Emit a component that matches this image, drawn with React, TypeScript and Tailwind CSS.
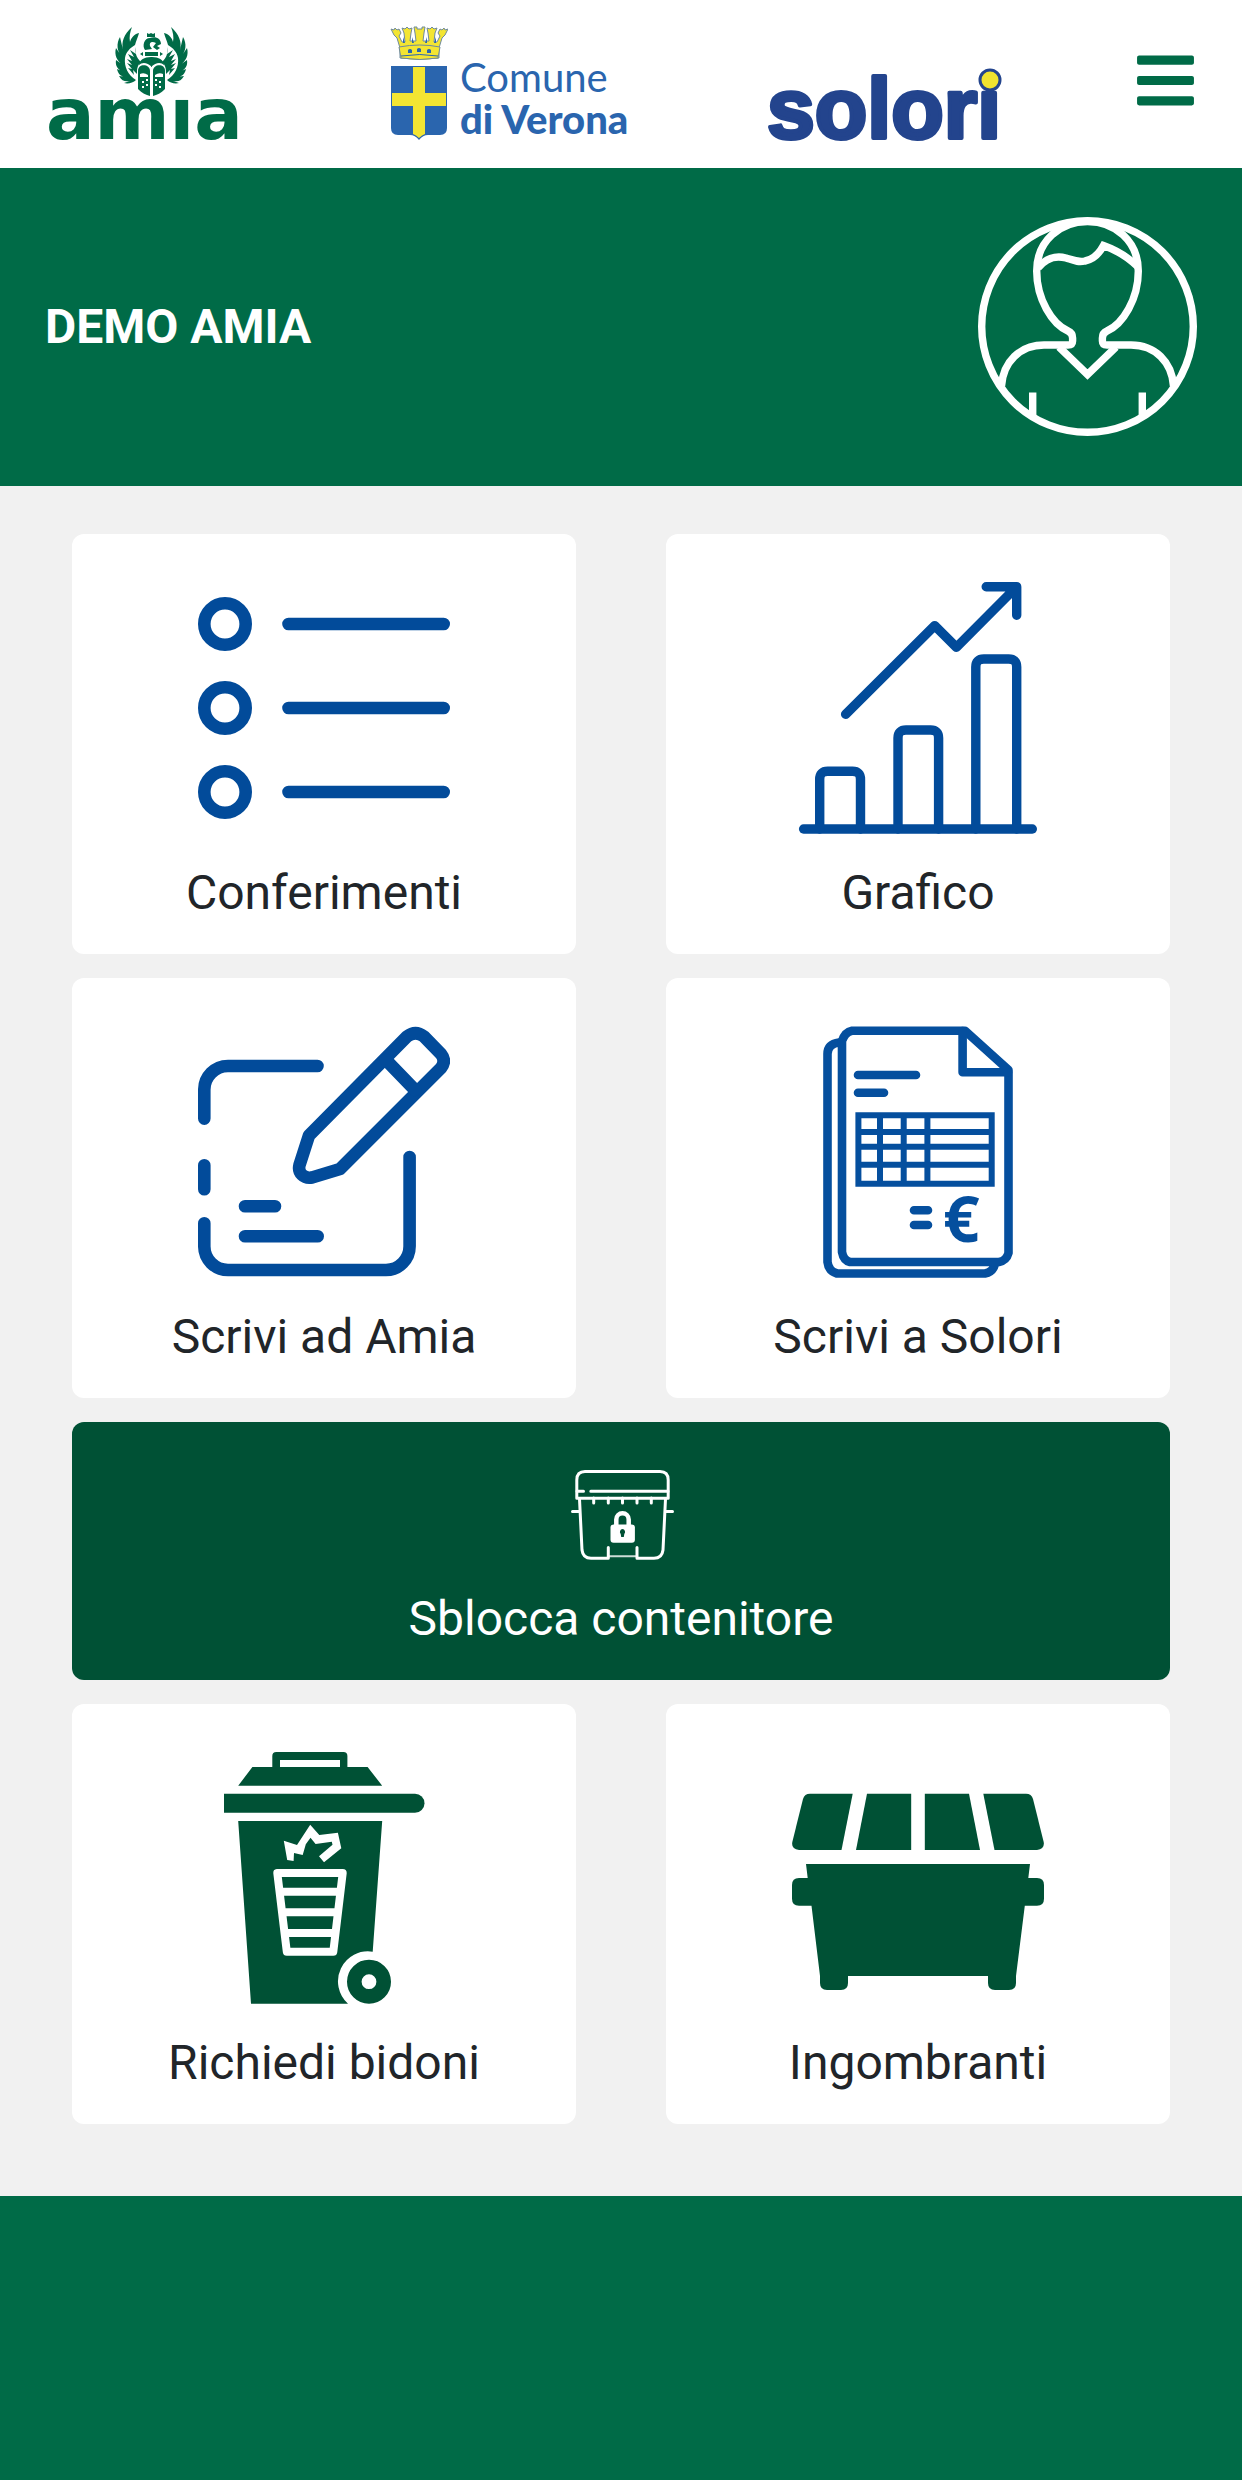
import type { ReactNode } from 'react'
import { FaBars } from 'react-icons/fa'

interface TileProps {
  label: string
  icon: ReactNode
}

function Tile({ label, icon }: TileProps) {
  return (
    <a href="#" className="flex flex-col items-center gap-6 rounded-xl bg-white pt-12 pb-[26px] text-[#212529]">
      {icon}
      <span className="text-5xl leading-[70px]">{label}</span>
    </a>
  )
}

/* Half of the emblem, mirrored around the logo's axis */
function AmiaWing() {
  return (
    <>
      <path d="M84 3C76 10 73 18 75 26L72 13C68 20 69 27 74 33L68 24C66 31 69 37 75 41L68 36C67 42 70 46 76 48L69 45C70 50 73 53 79 53L71 52C74 57 77 58 82 57L76 59C80 60 85 59 88 56C80 51 76 43 77 34C78 28 82 24 87 21C88 17 90 13 91 9C86 10 83 14 82 18C81 13 82 8 84 3Z" />
      <path d="M88 23C87 29 88 33 93 38C89 42 89 45 89 50L85 46L86 51L80 44L84 45L79 39L84 41L79 35L84 37L80 30L86 33L82 26L88 30Z" />
      <path d="M102 72V47C102 40 90 39 90 47V65C94 69 98 71 102 72Z" />
      <path d="M91 40C92 36 96 33 103 33H104V43C99 38 94 38 91 41Z" />
    </>
  )
}

function AmiaLogo() {
  return (
    <svg
      viewBox="0 0 207 120"
      className="h-[120px] w-[207px] overflow-visible"
      fill="#006b47"
      role="img"
      aria-label="amia"
    >
      <AmiaWing />
      <g transform="matrix(-1 0 0 1 207 0)">
        <AmiaWing />
      </g>
      <path d="M97 28H110V32H97ZM92 30L95 28V32ZM115 30L112 28V32Z" />
      <path d="M99 9l2 1 2-1 2 1 2-1v4h-8zM97 26C94 22 96 14 102 14C108 12 113 15 113 20L109 22L112 24L109 26L105 23L108 19C104 17 101 18 102 22L104 25Z" />
      <path
        fill="#fff"
        d="M92 50q4-2 8 1v2h-8zM115 50q-4-2-8 1v2h8zM94 57h2v2h-2zM98 55h2v2h-2zM98 60h2v2h-2zM94 62h2v2h-2zM111 57h2v2h-2zM107 55h2v2h-2zM107 60h2v2h-2zM111 62h2v2h-2z"
      />
      <text x="-2" y="115" className="font-['DejaVu_Sans',sans-serif] text-[72px] font-bold">
        amıa
      </text>
    </svg>
  )
}

function VeronaLogo() {
  return (
    <div className="flex w-[244px] gap-3 text-[#2a65ae]">
      <svg viewBox="0 0 58 120" className="h-[120px] w-[58px] shrink-0" aria-hidden="true">
        <g fill="#f3e532" stroke="#6f8a9c" strokeWidth="1" strokeLinejoin="round">
          <path d="M10 24L7 14L4 11L1 5L4 6L5 4L7 6L9 5L11 9L9 12L12 18L15 18L14 9L12 4L15 5L17 3L19 5L22 4L21 9L20 17H26L25 9L24 3H27V5H32V3H35L34 9L33 17H39L38 9L37 4L40 5L42 3L44 5L47 4L45 9L44 18L47 18L50 12L48 9L50 5L52 6L54 4L55 6L58 5L55 11L52 14L49 24V34Q30 37 10 34Z" />
          <path d="M9 23Q30 19 50 23L48 34Q30 37 11 34Z" />
        </g>
        <path
          d="M18 29v-3q2-2 4 0v3zM27 28v-3q2-2 4 0v3zM37 29v-3q2-2 4 0v3zM22 13l2 6h-2zM37 13l-2 6h2zM13 13l2 6h-2zM46 13l-2 6h2z"
          fill="#2a65ae"
        />
        <path d="M11 32Q30 29 48 32" fill="none" stroke="#2a65ae" strokeWidth="1" />
        <path d="M1 42H57V104Q57 111 50 111H38Q33 111 29 116Q25 111 20 111H8Q1 111 1 104Z" fill="#2a65ae" />
        <path d="M23 43H35V69H56V82H35V110Q32 111 29 114Q26 111 23 110V82H2V69H23Z" fill="#f3e532" />
      </svg>
      <p className="flex flex-col pt-8 font-['Lato',sans-serif] text-[40px] leading-[42px] whitespace-nowrap">
        <span>Comune</span>
        <span className="font-black">di Verona</span>
      </p>
    </div>
  )
}

function SoloriLogo() {
  return (
    <svg viewBox="0 0 233 120" className="h-[120px] w-[233px] overflow-visible" role="img" aria-label="solori">
      <text
        x="-2"
        y="114"
        fill="#23448d"
        stroke="#23448d"
        strokeWidth="4"
        strokeLinejoin="round"
        className="font-['Liberation_Sans',sans-serif] text-[86px] font-bold"
      >
        solori
      </text>
      <circle cx="221" cy="56" r="10" fill="#f0e32f" stroke="#23448d" strokeWidth="3" />
    </svg>
  )
}

function Avatar() {
  return (
    <svg viewBox="0 -1 219 222" className="h-[222px] w-[219px]" fill="none" stroke="#fff" strokeWidth="7.4">
      <circle cx="109.5" cy="109.5" r="105.8" />
      <path d="M23.500 169C25 145 42 128 66 128H90Q94.600 128 94.600 124V121Q94.600 116 90 114C74 107 58.700 82 58.700 54C58.700 24 82 4.500 109.500 4.500C137 4.500 160.300 24 160.300 54C160.300 82 145 107 129 114Q124.400 116 124.400 121V124Q124.400 128 129 128H153C177 128 194 145 195.500 169" />
      <path d="M60 51C67 42 77 38 88 41C96 43.500 100 45.500 107 44C115 42.500 121 37 125.500 28.500C138 33 150 40 160 50" />
      <path d="M81 130L109.500 157.500L138 130M54.700 175.500V200M164.300 175.500V200" />
    </svg>
  )
}

function ListIcon() {
  return (
    <svg viewBox="0 0 252 252" className="size-63" fill="none" stroke="#024b9a" strokeWidth="12.6" strokeLinecap="round">
      <circle cx="27" cy="42" r="20.700" />
      <circle cx="27" cy="126" r="20.700" />
      <circle cx="27" cy="210" r="20.700" />
      <path d="M90.500 42H245.700M90.500 126H245.700M90.500 210H245.700" />
    </svg>
  )
}

function ChartIcon() {
  return (
    <svg
      viewBox="0 0 252 252"
      className="size-63"
      fill="none"
      stroke="#024b9a"
      strokeWidth="9.4"
      strokeLinecap="round"
      strokeLinejoin="round"
    >
      <path d="M53.600 132.300L142.700 43.700L164.500 65.300L224.700 4.700M194.200 4.700H224.700V33.300" />
      <path d="M11.600 247H240.300" />
      <path d="M27.700 247V197.300Q27.700 189.300 35.700 189.300H60.500Q68.500 189.300 68.500 197.300V247" />
      <path d="M106 247V156Q106 148 114 148H138.600Q146.600 148 146.600 156V247" />
      <path d="M183.800 247V85Q183.800 77 191.800 77H216.700Q224.700 77 224.700 85V247" />
    </svg>
  )
}

function WriteIcon() {
  return (
    <svg
      viewBox="0 0 252 252"
      className="size-63"
      fill="none"
      stroke="#024b9a"
      strokeWidth="12.6"
      strokeLinecap="round"
      strokeLinejoin="round"
    >
      <path d="M119.500 40H30A23.700 23.700 0 0 0 6.300 64V92.600M6.300 139.300V163.300" />
      <path d="M6.300 197.300V220A23.700 23.700 0 0 0 30 244H188A23.700 23.700 0 0 0 211.600 220V131" />
      <path d="M47 180.300H77M47 210.300H119.700" />
      <path d="M111 109.500L209 10.500Q217.500 4 226 10.500L243 28Q248.500 35 243 42L142 143L114 151.500C106 153 99.500 147 101.500 139Z" />
      <path d="M188 34L217 64" />
    </svg>
  )
}

function InvoiceIcon() {
  return (
    <svg
      viewBox="0 0 252 252"
      className="size-63"
      fill="none"
      stroke="#054f9e"
      strokeWidth="8.600"
      strokeLinecap="round"
      strokeLinejoin="round"
    >
      <path d="M47 16.500Q35.500 18 35.500 28V236Q36.500 245 45 247.500H193Q201 246 203 238" />
      <path d="M173 4.700H60Q53 6 50 15V226Q51.500 234.500 58 236H207Q214.500 234.500 216.500 227V44L173 4.700" />
      <path d="M170.600 5V46.300H216" />
      <path d="M66 49H124M66 66.700H92M122 184.300H136M122 199H136" />
      <path
        strokeWidth="6"
        strokeLinecap="butt"
        strokeLinejoin="miter"
        d="M66.400 89.300H199.700V157.700H66.400ZM66 106H200M66 120.700H200M66 138.700H200M88 89V158M111.700 89V158M135.400 89V158"
      />
      <text x="151" y="215.500" fill="#054f9e" stroke="none" className="font-['Open_Sans',sans-serif] text-[64px] font-bold">
        €
      </text>
    </svg>
  )
}

function ContainerIcon() {
  return (
    <svg
      viewBox="0 0 106 90"
      className="h-[90px] w-[106px]"
      fill="none"
      stroke="#fff"
      strokeWidth="3"
      strokeLinecap="round"
      strokeLinejoin="round"
    >
      <path d="M8.800 28.300V10Q8.800 1.500 17 1.500H92Q100.200 1.500 100.200 10V28.300Z" />
      <path d="M9 21.300H15.500M22.800 21.300H100" />
      <path d="M25.700 28V33M40.300 28V33M54.500 28V33M69 28V33M83.300 28V33" />
      <path d="M4.500 41.500H11M98 41.500H104.500" />
      <path d="M11.500 29L14 80Q15 88.300 23 88.300H40.300V77.500M97.500 29L95 80Q94 88.300 86 88.300H69V77.500" />
      <path d="M41 86.300H68" strokeWidth="2" opacity="0.8" />
      <path d="M48.300 56V49.500A6.200 6.200 0 0 1 60.700 49.500V56" strokeWidth="4.500" />
      <rect x="42.500" y="54.500" width="24.400" height="18.200" rx="3" fill="#fff" stroke="none" />
      <path d="M54.500 59A3 3 0 0 1 56.300 64L55.800 67H53.200L52.700 64A3 3 0 0 1 54.500 59Z" fill="#005135" stroke="none" />
    </svg>
  )
}

function BinIcon() {
  return (
    <svg viewBox="0 0 252 252" className="size-63" fill="#005135">
      <path
        d="M74.300 15V4Q74.300 0 78.300 0H145.400Q149.400 0 149.400 4V15H169.600L184.200 33.700H40.200L54.400 15ZM82 15H142V8H82Z"
        fillRule="evenodd"
      />
      <path d="M26 41.700H217A9.500 9.500 0 0 1 217 60.700H26Z" />
      <path d="M40.200 69H184.200L174.700 199.700A30 30 0 0 0 150 251.700H53Z" />
      <circle cx="171" cy="229.700" r="14.700" fill="none" stroke="#005135" strokeWidth="14.600" />
      <path
        fill="#fff"
        d="M85.800 88.700L99 93L112.200 72.700L121.300 83L139.900 80.700L143.300 96.300L126 110.300L121 104.300L134.500 92.700L133.800 89.700L117.600 92L112.500 85.700L107.800 92.300L104.700 103L96 101L95.600 109L89.200 108Z"
      />
      <path
        fill="none"
        stroke="#fff"
        strokeWidth="8"
        strokeLinejoin="round"
        d="M79.300 121H144.700L135.300 199.700H88.800ZM82 139.700H142M84 160.300H140M86 181H138"
      />
    </svg>
  )
}

function SkipIcon() {
  return (
    <svg viewBox="0 0 252 252" className="size-63" fill="#005135">
      <path d="M18 41.700H60.700L49.500 98H7Q-1 97 0.300 90L11 47Q12.500 41.700 18 41.700Z" />
      <path d="M75 41.700H119.200V98H64Z" />
      <path d="M177 41.700H132.800V98H188Z" />
      <path d="M234 41.700H191.300L202.500 98H245Q253 97 251.700 90L241 47Q239.500 41.700 234 41.700Z" />
      <path d="M14 112H238L236.300 126H245Q252 126 252 133V146.700Q252 153.700 245 153.700H232.800L224 224V231Q224 238 217 238H203Q196 238 196 231V224H56V231Q56 238 49 238H35Q28 238 28 231V224L19.500 153.700H7Q0 153.700 0 146.700V133Q0 126 7 126H15.700Z" />
    </svg>
  )
}

export default function App() {
  return (
    <div className="flex min-h-screen flex-col bg-[#006b47] font-['Roboto',sans-serif]">
      <header className="flex items-start justify-between bg-white px-12 py-6">
        <AmiaLogo />
        <VeronaLogo />
        <SoloriLogo />
        <button type="button" aria-label="Menu" className="mt-6 text-[#006b47]">
          <FaBars className="h-[65px] w-[57px]" />
        </button>
      </header>

      <section className="flex items-center justify-between px-[45px] py-12">
        <h1 className="text-5xl leading-[72px] font-bold text-white">DEMO AMIA</h1>
        <Avatar />
      </section>

      <main className="grid grid-cols-2 gap-x-[90px] gap-y-6 bg-[#f1f1f1] px-[72px] pt-12 pb-[72px]">
        <Tile label="Conferimenti" icon={<ListIcon />} />
        <Tile label="Grafico" icon={<ChartIcon />} />
        <Tile label="Scrivi ad Amia" icon={<WriteIcon />} />
        <Tile label="Scrivi a Solori" icon={<InvoiceIcon />} />

        {/* Sblocco contenitore a tutta larghezza */}
        <button
          type="button"
          className="col-span-2 flex flex-col items-center gap-6 rounded-xl bg-[#005135] pt-12 pb-[26px] text-white"
        >
          <ContainerIcon />
          <span className="text-5xl leading-[70px]">Sblocca contenitore</span>
        </button>

        <Tile label="Richiedi bidoni" icon={<BinIcon />} />
        <Tile label="Ingombranti" icon={<SkipIcon />} />
      </main>
    </div>
  )
}
